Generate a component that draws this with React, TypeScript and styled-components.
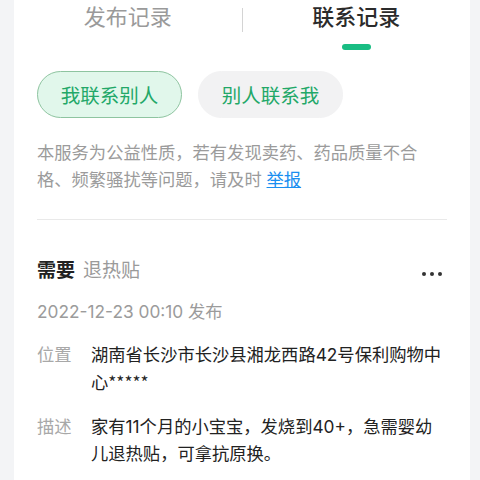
import React from "react";
import styled, { createGlobalStyle } from "styled-components";

const GlobalStyle = createGlobalStyle`
  html, body {
    margin: 0;
    padding: 0;
    background: #f3f4f6;
  }
  body {
    font-family: "Inter", "Noto Sans CJK SC", sans-serif;
    -webkit-font-smoothing: antialiased;
  }
`;

const Page = styled.div`
  display: flex;
  padding: 0 10px 0 14px;
  height: 480px;
  overflow: hidden;
`;

const Card = styled.div`
  flex: 1;
  background: #fff;
  display: flex;
  flex-direction: column;
`;

const Tabs = styled.div`
  display: grid;
  grid-template-columns: 1fr 1px 1fr;
`;

const TabItem = styled.div`
  display: flex;
  flex-direction: column;
  align-items: center;
`;

const TabLabel = styled.span<{ $active?: boolean }>`
  font-size: 22px;
  line-height: 34px;
  color: ${(p) => (p.$active ? "#2b2b2b" : "#9a9a9a")};
  font-weight: ${(p) => (p.$active ? 500 : 400)};
`;

const TabLine = styled.div`
  width: 29px;
  height: 6px;
  border-radius: 3px;
  background: #19bd83;
  margin-top: 10px;
`;

const TabDivider = styled.div`
  width: 1px;
  height: 24px;
  margin-top: 8px;
  background: #d4d4d4;
`;

const Body = styled.div`
  padding: 0 23px;
  display: flex;
  flex-direction: column;
`;

const Chips = styled.div`
  display: flex;
  gap: 16px;
  margin-top: 21px;
`;

const Chip = styled.div<{ $active?: boolean }>`
  width: 145px;
  height: 47px;
  box-sizing: border-box;
  border-radius: 24px;
  display: flex;
  align-items: center;
  justify-content: center;
  font-size: 19.5px;
  color: #22a868;
  background: ${(p) => (p.$active ? "#e1f7eb" : "#f2f2f3")};
  border: 1px solid ${(p) => (p.$active ? "#8ec4a0" : "#f2f2f3")};
`;

const Notice = styled.p`
  margin: 21px 0 0;
  padding-right: 24px;
  font-size: 17.3px;
  line-height: 27px;
  color: #9b9b9b;
`;

const ReportLink = styled.a`
  color: #1a8ef0;
  text-decoration: underline;
`;

const Divider = styled.div`
  height: 1px;
  background: #e9e9e9;
  margin-top: 26px;
`;

const Header = styled.div`
  display: flex;
  align-items: center;
  justify-content: space-between;
  margin-top: 37px;
  height: 28px;
`;

const Title = styled.div`
  font-size: 19px;
  line-height: 28px;
  color: #222;
  b {
    font-weight: 700;
  }
  span {
    color: #9a9a9a;
    margin-left: 8px;
  }
`;

const More = styled.div`
  display: flex;
  gap: 4px;
  margin-right: 5px;
  margin-top: 6px;
  i {
    width: 4px;
    height: 4px;
    border-radius: 50%;
    background: #333;
  }
`;

const DateLine = styled.div`
  margin-top: 13px;
  font-size: 17.3px;
  line-height: 27px;
  color: #9b9b9b;
`;

const Field = styled.div<{ $gap: number }>`
  display: grid;
  grid-template-columns: 54px 1fr;
  margin-top: ${(p) => p.$gap}px;
  font-size: 17.3px;
  line-height: 27px;
`;

const Label = styled.span`
  color: #a8a8a8;
`;

const Value = styled.span`
  color: #222;
`;

const Mask = styled.span`
  font-family: "Noto Sans CJK SC", sans-serif;
`;

export default function App() {
  return (
    <>
      <GlobalStyle />
      <Page>
        <Card>
          <Tabs>
            <TabItem>
              <TabLabel>发布记录</TabLabel>
            </TabItem>
            <TabDivider />
            <TabItem>
              <TabLabel $active>联系记录</TabLabel>
              <TabLine />
            </TabItem>
          </Tabs>
          <Body>
            <Chips>
              <Chip $active>我联系别人</Chip>
              <Chip>别人联系我</Chip>
            </Chips>
            <Notice>
              本服务为公益性质，若有发现卖药、药品质量不合格、频繁骚扰等问题，请及时{" "}
              <ReportLink>举报</ReportLink>
            </Notice>
            <Divider />
            <Header>
              <Title>
                <b>需要</b>
                <span>退热贴</span>
              </Title>
              <More>
                <i />
                <i />
                <i />
              </More>
            </Header>
            <DateLine>2022-12-23 00:10 发布</DateLine>
            <Field $gap={16}>
              <Label>位置</Label>
              <Value>
                湖南省长沙市长沙县湘龙西路42号保利购物中心<Mask>*****</Mask>
              </Value>
            </Field>
            <Field $gap={17}>
              <Label>描述</Label>
              <Value>家有11个月的小宝宝，发烧到40+，急需婴幼儿退热贴，可拿抗原换。</Value>
            </Field>
          </Body>
        </Card>
      </Page>
    </>
  );
}
